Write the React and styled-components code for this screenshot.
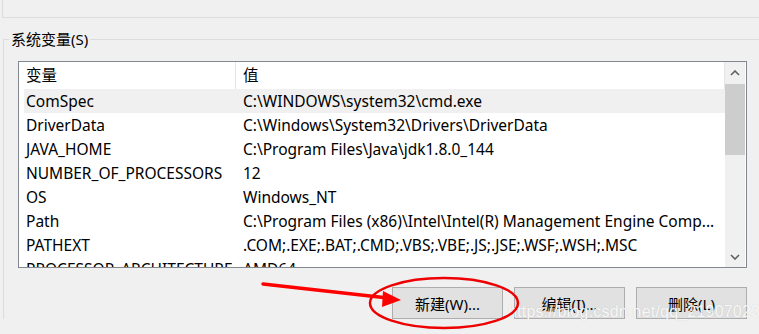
import styled, { createGlobalStyle } from "styled-components"

const GlobalStyle = createGlobalStyle`
  body {
    margin: 0;
    background: #f0f0f0;
    font-family: "Noto Sans", "Noto Sans CJK SC", sans-serif;
  }
`

const FONT = `"Noto Sans", "Noto Sans CJK SC", sans-serif`

const Page = styled.div`
  position: relative;
  width: 759px;
  height: 334px;
  overflow: hidden;
  background: #f0f0f0;
  padding-left: 2px;
  box-sizing: border-box;
  font-family: ${FONT};
  font-size: 15px;
  color: #000;
`

const PrevGroup = styled.div`
  height: 17px;
  margin-right: -20px;
  border-left: 1px solid #dcdcdc;
  border-bottom: 1px solid #dcdcdc;
`

const Group = styled.fieldset`
  margin: 11px -20px 0 1px;
  padding: 0 0 0 5px;
  border: 1px solid #dcdcdc;
  border-right: none;
  border-bottom: none;
  min-width: 0;
`

const Legend = styled.legend`
  padding: 0 2px;
  line-height: 20px;
  font-size: 15px;
`

const Column = styled.div`
  width: 729px;
  margin: 12px 0 0 9px;
`

const ListBox = styled.div`
  box-sizing: border-box;
  width: 729px;
  height: 207px;
  border: 1px solid #828790;
  background: #fff;
  display: flex;
  overflow: hidden;
  font-size: 15.5px;
`

const Table = styled.div`
  flex: 1;
  min-width: 0;
  overflow: hidden;
`

const Cols = styled.div`
  display: grid;
  grid-template-columns: 212px 1fr;
`

const Header = styled(Cols)`
  height: 27px;
  line-height: 27px;
  margin-left: 5px;
`

const HeadCell = styled.div`
  padding-left: ${p => (p.$second ? 7 : 2)}px;
  border-left: ${p => (p.$second ? "1px solid #e5e5e5" : "none")};
  border-right: ${p => (p.$second ? "1px solid #e5e5e5" : "none")};
  margin-left: ${p => (p.$second ? -1 : 0)}px;
`

const Row = styled(Cols)`
  height: 24px;
  line-height: 24px;
  margin-left: 5px;
  background: ${p => (p.$selected ? "#f0f0f0" : "transparent")};
`

const Cell = styled.div`
  padding-left: ${p => (p.$second ? 7 : 2)}px;
  white-space: nowrap;
  overflow: hidden;
`

const Scrollbar = styled.div`
  width: 20px;
  margin-right: 1px;
  background: #f0f0f0;
  display: flex;
  flex-direction: column;
`

const ArrowBtn = styled.div`
  height: ${p => p.$h}px;
  display: flex;
  align-items: center;
  justify-content: center;
`

const Thumb = styled.div`
  height: 71px;
  background: #cdcdcd;
`

const Track = styled.div`
  flex: 1;
`

const Buttons = styled.div`
  display: flex;
  justify-content: flex-end;
  gap: 11px;
  margin-top: 19px;
`

const Button = styled.button`
  box-sizing: border-box;
  width: 111px;
  height: 32px;
  background: #e1e1e1;
  border: 1px solid #adadad;
  border-radius: 0;
  font-family: ${FONT};
  font-size: 15px;
  color: #000;
  padding: 0;
`

const Watermark = styled.div`
  position: absolute;
  left: 508px;
  top: 303px;
  font-family: "Liberation Sans", Arial, sans-serif;
  font-size: 16px;
  letter-spacing: 0.2px;
  color: rgba(255, 255, 255, 0.9);
  text-shadow: 0 0 1px rgba(150, 150, 150, 0.45);
  pointer-events: none;
  white-space: nowrap;
`

const Annotation = styled.svg`
  position: absolute;
  left: 0;
  top: 0;
  pointer-events: none;
`

const Chevron = ({ up }) => (
  <svg width="10" height="6" viewBox="0 0 10 6">
    <polyline
      points={up ? "1,5 5,1 9,5" : "1,1 5,5 9,1"}
      fill="none"
      stroke="#606060"
      strokeWidth="1.6"
    />
  </svg>
)

const vars = [
  ["ComSpec", "C:\\WINDOWS\\system32\\cmd.exe"],
  ["DriverData", "C:\\Windows\\System32\\Drivers\\DriverData"],
  ["JAVA_HOME", "C:\\Program Files\\Java\\jdk1.8.0_144"],
  ["NUMBER_OF_PROCESSORS", "12"],
  ["OS", "Windows_NT"],
  ["Path", "C:\\Program Files (x86)\\Intel\\Intel(R) Management Engine Comp..."],
  ["PATHEXT", ".COM;.EXE;.BAT;.CMD;.VBS;.VBE;.JS;.JSE;.WSF;.WSH;.MSC"],
  ["PROCESSOR_ARCHITECTURE", "AMD64"],
]

export default function App() {
  return (
    <>
      <GlobalStyle />
      <Page>
        <PrevGroup />
        <Group>
          <Legend>系统变量(S)</Legend>
          <Column>
            <ListBox>
              <Table>
                <Header>
                  <HeadCell>变量</HeadCell>
                  <HeadCell $second>值</HeadCell>
                </Header>
                {vars.map(([name, value], i) => (
                  <Row key={name} $selected={i === 0}>
                    <Cell>{name}</Cell>
                    <Cell $second>{value}</Cell>
                  </Row>
                ))}
              </Table>
              <Scrollbar>
                <ArrowBtn $h={22}><Chevron up /></ArrowBtn>
                <Thumb />
                <Track />
                <ArrowBtn $h={20}><Chevron /></ArrowBtn>
              </Scrollbar>
            </ListBox>
            <Buttons>
              <Button>新建(W)...</Button>
              <Button>编辑(I)...</Button>
              <Button>删除(L)</Button>
            </Buttons>
          </Column>
        </Group>

        <Watermark>https://blog.csdn.net/qq_21907023</Watermark>

        <Annotation width="759" height="334" viewBox="0 0 759 334">
          <line x1="263" y1="284" x2="388" y2="298" stroke="#ff0000" strokeWidth="3.5" strokeLinecap="round" />
          <polygon points="401,300 383,291 382,307" fill="#ff0000" />
          <ellipse cx="444" cy="303" rx="74" ry="25" fill="none" stroke="#ee0000" strokeWidth="2.5" />
        </Annotation>
      </Page>
    </>
  )
}
